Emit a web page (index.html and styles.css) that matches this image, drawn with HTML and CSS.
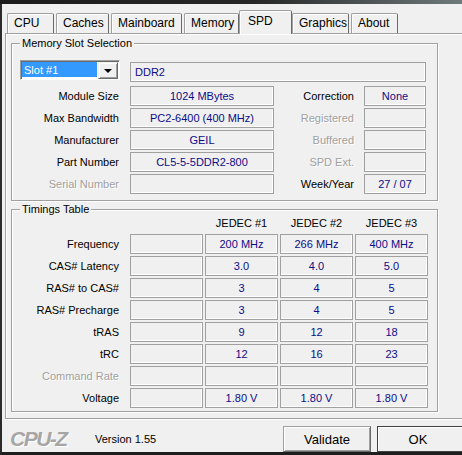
FILE: index.html
```html
<!DOCTYPE html>
<html lang="en">
<head>
    <meta charset="UTF-8">
    <title>CPU-Z</title>
    <link rel="stylesheet" href="styles.css">
</head>
<body>

    <div class="titlebar"></div>

    <div class="window">
        <div class="tabs">
            <div class="tab tab-cpu">CPU</div>
            <div class="tab tab-caches">Caches</div>
            <div class="tab tab-mainboard">Mainboard</div>
            <div class="tab tab-memory">Memory</div>
            <div class="tab tab-spd active">SPD</div>
            <div class="tab tab-graphics">Graphics</div>
            <div class="tab tab-about">About</div>
        </div>

        <div class="panel">
            <!-- Memory slot -->
            <fieldset class="group">
                <legend>Memory Slot Selection</legend>
                <div class="slot-row">
                    <div class="combo">
                        <span class="combo-value">Slot #1</span>
                        <span class="combo-btn"><span class="arrow"></span></span>
                    </div>
                    <div class="field field-type">DDR2</div>
                </div>
                <div class="info-grid">
                    <div class="label">Module Size</div>
                    <div class="field">1024 MBytes</div>
                    <div class="label">Correction</div>
                    <div class="field">None</div>

                    <div class="label">Max Bandwidth</div>
                    <div class="field">PC2-6400 (400 MHz)</div>
                    <div class="label off">Registered</div>
                    <div class="field"></div>

                    <div class="label">Manufacturer</div>
                    <div class="field">GEIL</div>
                    <div class="label off">Buffered</div>
                    <div class="field"></div>

                    <div class="label">Part Number</div>
                    <div class="field">CL5-5-5DDR2-800</div>
                    <div class="label off">SPD Ext.</div>
                    <div class="field"></div>

                    <div class="label off">Serial Number</div>
                    <div class="field"></div>
                    <div class="label">Week/Year</div>
                    <div class="field">27 / 07</div>
                </div>
            </fieldset>

            <!-- Timings -->
            <fieldset class="group timings">
                <legend>Timings Table</legend>
                <div class="timing-head">
                    <div></div>
                    <div></div>
                    <div>JEDEC #1</div>
                    <div>JEDEC #2</div>
                    <div>JEDEC #3</div>
                </div>
                <div class="timing-grid">
                    <div class="label">Frequency</div>
                    <div class="field"></div>
                    <div class="field">200 MHz</div>
                    <div class="field">266 MHz</div>
                    <div class="field">400 MHz</div>

                    <div class="label">CAS# Latency</div>
                    <div class="field"></div>
                    <div class="field">3.0</div>
                    <div class="field">4.0</div>
                    <div class="field">5.0</div>

                    <div class="label">RAS# to CAS#</div>
                    <div class="field"></div>
                    <div class="field">3</div>
                    <div class="field">4</div>
                    <div class="field">5</div>

                    <div class="label">RAS# Precharge</div>
                    <div class="field"></div>
                    <div class="field">3</div>
                    <div class="field">4</div>
                    <div class="field">5</div>

                    <div class="label">tRAS</div>
                    <div class="field"></div>
                    <div class="field">9</div>
                    <div class="field">12</div>
                    <div class="field">18</div>

                    <div class="label">tRC</div>
                    <div class="field"></div>
                    <div class="field">12</div>
                    <div class="field">16</div>
                    <div class="field">23</div>

                    <div class="label off">Command Rate</div>
                    <div class="field"></div>
                    <div class="field"></div>
                    <div class="field"></div>
                    <div class="field"></div>

                    <div class="label">Voltage</div>
                    <div class="field"></div>
                    <div class="field">1.80 V</div>
                    <div class="field">1.80 V</div>
                    <div class="field">1.80 V</div>
                </div>
            </fieldset>
        </div>

        <div class="bottombar">
            <div class="logo">CPU-Z</div>
            <div class="version">Version 1.55</div>
            <div class="buttons">
                <button class="btn">Validate</button>
                <button class="btn btn-default">OK</button>
            </div>
        </div>
    </div>

</body>
</html>
```

FILE: styles.css
```css
* {
    box-sizing: border-box;
}
body {
    margin: 0;
    width: 462px;
    height: 455px;
    overflow: hidden;
    background-color: #f0f0f0;
    font-family: "Liberation Sans", Arial, sans-serif;
    font-size: 11px;
    color: #000;
}
.titlebar {
    height: 4px;
    background: linear-gradient(to right, #1c1c1c 0%, #262626 55%, #6e7a7a 100%);
}
.window {
    height: 451px;
    border-left: 2px solid #2b2b2b;
    border-bottom: 3px solid #1e1e1e;
    display: flex;
    flex-direction: column;
}

/* tabs */
.tabs {
    height: 29px;
    display: flex;
    align-items: flex-end;
    padding-left: 5px;
    font-size: 12px;
}
.tab {
    height: 20px;
    margin-left: 2px;
    padding-left: 6px;
    line-height: 19px;
    white-space: nowrap;
    border: 1px solid #a0a0a0;
    border-bottom: 0;
    border-right-color: #6a6a6a;
    border-radius: 2px 2px 0 0;
    box-shadow: inset 1px 1px #fff;
}
.tab-cpu { width: 47px; margin-left: 0; }
.tab-caches { width: 53px; }
.tab-mainboard { width: 71px; }
.tab-memory { width: 55px; }
.tab-spd { width: 53px; }
.tab-graphics { width: 57px; margin-left: 0; }
.tab-about { width: 47px; }
.tab.active {
    height: 24px;
    margin-left: 0;
    margin-bottom: -1px;
    padding-left: 8px;
    line-height: 21px;
    background-color: #f0f0f0;
    position: relative;
    z-index: 1;
}

/* panel */
.panel {
    height: 386px;
    margin-left: 3px;
    border-top: 1px solid #a0a0a0;
    border-left: 1px solid #a0a0a0;
    border-bottom: 1px solid #a0a0a0;
    box-shadow: inset 1px 1px #fff, 0 1px #fff;
}
.group {
    width: 427px;
    margin: 2px 0 0 5px;
    padding: 10px 0 6px 0;
    min-width: 0;
    border: 1px solid #a0a0a0;
    box-shadow: inset 1px 1px #fff, 1px 1px #fff;
}
.group legend {
    margin-left: 8px;
    padding: 0 2px;
    font-size: 11px;
    line-height: 14px;
    background-color: #f0f0f0;
}
.group.timings {
    margin-top: 1px;
    padding: 0 0 3px 0;
}

/* slot selection */
.slot-row {
    display: flex;
    height: 22px;
    margin-bottom: 4px;
}
.combo {
    width: 100px;
    height: 20px;
    margin-left: 8px;
    display: flex;
    padding: 1px;
    border: 1px solid;
    border-color: #a0a0a0 #fff #fff #a0a0a0;
    box-shadow: inset 1px 1px #696969;
    background-color: #fff;
}
.combo-value {
    width: 76px;
    margin: 0 0 1px 0;
    padding-left: 2px;
    line-height: 16px;
    color: #fff;
    background-color: #3399ff;
}
.combo-btn {
    width: 20px;
    height: 17px;
    margin-left: 1px;
    display: flex;
    align-items: center;
    justify-content: center;
    background-color: #f0f0f0;
    border: 1px solid;
    border-color: #f0f0f0 #696969 #696969 #f0f0f0;
    box-shadow: inset 1px 1px #fff, inset -1px -1px #a0a0a0;
}
.arrow {
    width: 0;
    height: 0;
    border-left: 4px solid transparent;
    border-right: 4px solid transparent;
    border-top: 4px solid #000;
}
.field-type {
    width: 296px;
    margin-left: 10px;
    margin-top: 2px;
    padding-left: 4px;
}

.info-grid {
    display: grid;
    grid-template-columns: 118px 144px 90px 62px;
    grid-auto-rows: 20px;
    row-gap: 2px;
}
.label {
    text-align: right;
    padding-right: 11px;
    line-height: 20px;
    white-space: nowrap;
}
.info-grid .label:nth-child(4n+3) {
    padding-right: 10px;
}
.label.off {
    color: #a0a0a0;
    text-shadow: 1px 1px #fff;
}
.field {
    height: 20px;
    line-height: 18px;
    text-align: center;
    color: #0c0c88;
    white-space: nowrap;
    overflow: hidden;
    border: 1px solid #a0a0a0;
    box-shadow: inset -1px -1px #fff;
}
.field.field-type {
    text-align: left;
}

/* timings */
.timing-head {
    display: grid;
    grid-template-columns: 116px repeat(4, 73px);
    column-gap: 2px;
    height: 14px;
    line-height: 14px;
    margin-bottom: 4px;
    text-align: center;
}
.timing-grid {
    display: grid;
    grid-template-columns: 116px repeat(4, 73px);
    grid-auto-rows: 20px;
    column-gap: 2px;
    row-gap: 2px;
}
.timing-grid .label {
    padding-right: 9px;
}

/* bottom */
.bottombar {
    flex: 1;
    display: flex;
    align-items: flex-end;
}
.logo {
    width: 60px;
    margin-left: 8px;
    line-height: 26px;
    font-size: 21px;
    font-style: italic;
    font-weight: bold;
    letter-spacing: -1.5px;
    color: #a6a6a6;
    text-shadow: 1px 1px #fff;
}
.version {
    margin-left: 25px;
    line-height: 26px;
}
.buttons {
    margin-left: auto;
    display: flex;
    gap: 6px;
}
.btn {
    width: 88px;
    height: 26px;
    padding: 0;
    font-family: "Liberation Sans", Arial, sans-serif;
    font-size: 13px;
    color: #000;
    background-color: #f0f0f0;
    border: 1px solid;
    border-color: #a0a0a0 #696969 #696969 #a0a0a0;
    box-shadow: inset 1px 1px #fff, inset -1px -1px #a0a0a0;
}
.btn-default {
    width: 85px;
    padding-right: 4px;
    border-color: #404040;
    border-right: 0;
    box-shadow: inset 1px 1px #fff;
}
```
